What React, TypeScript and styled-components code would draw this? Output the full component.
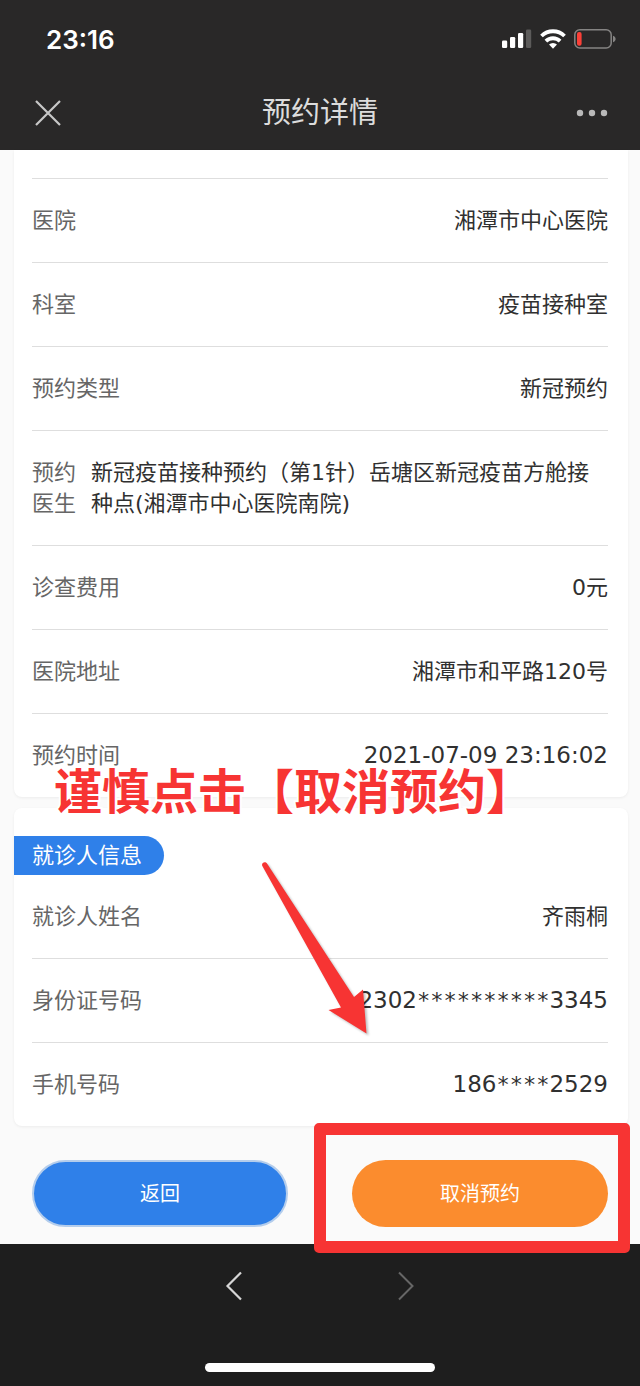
import React from "react";
import styled, { createGlobalStyle } from "styled-components";

const GlobalStyle = createGlobalStyle`
  * { box-sizing: border-box; }
  body {
    margin: 0;
    background: #1e1e1e;
    font-family: "DejaVu Sans", "Noto Sans CJK SC", sans-serif;
    font-size: 22px;
    line-height: 31px;
    color: #303030;
  }
  button {
    margin: 0;
    padding: 0;
    border: 0;
    background: none;
    font-family: inherit;
    cursor: pointer;
  }
`;

const Screen = styled.div`
  min-height: 100vh;
  display: flex;
  flex-direction: column;
  overflow: hidden;
`;

const Header = styled.header`
  background: #292828;
`;

const StatusBar = styled.div`
  height: 76px;
  padding: 2px 24px 0 46px;
  display: flex;
  align-items: center;
  justify-content: space-between;
`;

const Clock = styled.time`
  font-family: Inter, sans-serif;
  font-size: 26px;
  font-weight: 600;
  color: #fff;
`;

const StatusIcons = styled.div`
  display: flex;
  align-items: center;
  gap: 8px;
`;

const NavBar = styled.div`
  height: 74px;
  padding: 0 32px;
  display: grid;
  grid-template-columns: 32px 1fr 32px;
  align-items: center;
`;

const Title = styled.h1`
  margin: 0;
  text-align: center;
  font-size: 29px;
  line-height: 40px;
  font-weight: 400;
  color: #dcdcdc;
`;

const IconButton = styled.button`
  height: 32px;
  display: flex;
  align-items: center;
  justify-content: center;
  color: ${(p: { $color: string }) => p.$color};
`;

const Content = styled.main`
  background: #fafafa;
`;

const Card = styled.section<{ $first?: boolean }>`
  position: relative;
  margin: 0 12px 0 14px;
  padding: 28px 20px 0 18px;
  background: #fff;
  border-radius: ${(p) => (p.$first ? "0 0 8px 8px" : "8px")};
  box-shadow: 0 1px 3px rgba(0, 0, 0, 0.06);
  & + & { margin-top: 11px; }
`;

const Fields = styled.dl<{ $topLine?: boolean }>`
  margin: 0;
  border-top: ${(p) => (p.$topLine ? "1px solid #dedede" : "0")};
`;

const Field = styled.div`
  display: flex;
  justify-content: space-between;
  gap: 15px;
  padding: 26px 0;
  border-bottom: 1px solid #dedede;
  &:last-child { border-bottom: 0; }
`;

const Label = styled.dt<{ $narrow?: boolean }>`
  flex: none;
  width: ${(p) => (p.$narrow ? "44px" : "auto")};
  color: #666;
`;

const Value = styled.dd<{ $numeric?: boolean }>`
  margin: 0;
  font-size: ${(p) => (p.$numeric ? "23px" : "22px")};
`;

const Mask = styled.span`
  font-family: "DejaVu Sans Mono", monospace;
  font-size: 22px;
`;

const Badge = styled.h2`
  width: fit-content;
  margin: 0 0 0 -18px;
  padding: 4px 22px 4px 18px;
  border-radius: 0 20px 20px 0;
  background: #2f80e9;
  color: #fff;
  font-size: 22px;
  line-height: 31px;
  font-weight: 400;
`;

const Warning = styled.p`
  position: absolute;
  top: -48px;
  left: 40px;
  margin: 0;
  white-space: nowrap;
  font-size: 48px;
  line-height: 64px;
  font-weight: 700;
  color: #f73433;
  -webkit-text-stroke: 4px #fff;
  paint-order: stroke fill;
  z-index: 1;
`;

const Arrow = styled.svg`
  position: absolute;
  top: 48px;
  left: 242px;
  z-index: 1;
  filter: drop-shadow(2px 2px 1px rgba(0, 0, 0, 0.25));
`;

const Actions = styled.div`
  display: grid;
  grid-template-columns: 1fr 1fr;
  gap: 64px;
  padding: 34px 32px 17px;
`;

const ActionSlot = styled.div`
  position: relative;
  display: grid;
`;

const ActionButton = styled.button<{ $tone: "blue" | "orange" }>`
  height: 67px;
  border-radius: 34px;
  border: ${(p) => (p.$tone === "blue" ? "2px solid #b4cdec" : "0")};
  background: ${(p) => (p.$tone === "blue" ? "#2f80e9" : "#fb8c2e")};
  color: #fff;
  font-size: 20px;
  line-height: 28px;
`;

const Highlight = styled.div`
  position: absolute;
  inset: -37px -22px -26px -38px;
  border: 12px solid #f73433;
  border-radius: 5px;
  pointer-events: none;
  z-index: 1;
`;

const Footer = styled.footer`
  flex: 1;
  min-height: 142px;
  padding: 26px 0 14px;
  display: flex;
  flex-direction: column;
  align-items: center;
  justify-content: space-between;
  background: #1e1e1e;
`;

const HistoryNav = styled.nav`
  display: flex;
  gap: 140px;
`;

const HomeIndicator = styled.div`
  width: 36%;
  height: 9px;
  border-radius: 5px;
  background: #fff;
`;

const SignalIcon = () => (
  <svg width="30" height="20" viewBox="0 0 30 20" fill="#fff" aria-hidden="true">
    <rect x="0" y="11.5" width="5.2" height="7.5" rx="1.3" />
    <rect x="8" y="8" width="5.2" height="11" rx="1.3" />
    <rect x="16" y="4" width="5.2" height="15" rx="1.3" />
    <rect x="24" y="0.5" width="5.2" height="18.5" rx="1.3" fill="#5c5b5a" />
  </svg>
);

const WifiIcon = () => (
  <svg width="26" height="20" viewBox="0 0 26 20" fill="none" stroke="#fff" strokeWidth="3.8" aria-hidden="true">
    <path d="M1.500 7a16.300 16.300 0 0 1 23 0" />
    <path d="M5.900 12.200a10 10 0 0 1 14.200 0" />
    <path d="M13 19.800l-4-4.200a5.700 5.700 0 0 1 8 0z" fill="#fff" stroke="none" />
  </svg>
);

const BatteryIcon = () => (
  <svg width="42" height="20" viewBox="0 0 42 20" aria-hidden="true">
    <rect x="0.8" y="0.8" width="36.4" height="18.2" rx="5" fill="none" stroke="#858483" strokeWidth="1.5" />
    <rect x="3" y="3" width="4.6" height="13.8" rx="2" fill="#fb4038" />
    <path d="M39 6.800c1.600.6 2.600 1.700 2.600 3.200s-1 2.600-2.600 3.200z" fill="#858483" />
  </svg>
);

const App = () => (
  <Screen>
    <GlobalStyle />
    <Header>
      <StatusBar>
        <Clock>23:16</Clock>
        <StatusIcons>
          <SignalIcon />
          <WifiIcon />
          <BatteryIcon />
        </StatusIcons>
      </StatusBar>
      <NavBar>
        <IconButton $color="#c8c8c8" aria-label="关闭">
          <svg width="26" height="26" viewBox="0 0 26 26" fill="none" stroke="currentColor" strokeWidth="2.2">
            <path d="M1 1L25 25M25 1L1 25" />
          </svg>
        </IconButton>
        <Title>预约详情</Title>
        <IconButton $color="#b9b9b9" aria-label="更多">
          <svg width="32" height="8" viewBox="0 0 32 8" fill="currentColor">
            <circle cx="4" cy="4" r="3.2" />
            <circle cx="16" cy="4" r="3.2" />
            <circle cx="28" cy="4" r="3.2" />
          </svg>
        </IconButton>
      </NavBar>
    </Header>

    <Content>
      <Card $first>
        <Fields $topLine>
          <Field><Label>医院</Label><Value>湘潭市中心医院</Value></Field>
          <Field><Label>科室</Label><Value>疫苗接种室</Value></Field>
          <Field><Label>预约类型</Label><Value>新冠预约</Value></Field>
          <Field>
            <Label $narrow>预约医生</Label>
            <Value>新冠疫苗接种预约（第1针）岳塘区新冠疫苗方舱接种点(湘潭市中心医院南院)</Value>
          </Field>
          <Field><Label>诊查费用</Label><Value>0元</Value></Field>
          <Field><Label>医院地址</Label><Value>湘潭市和平路120号</Value></Field>
          <Field><Label>预约时间</Label><Value $numeric>2021-07-09 23:16:02</Value></Field>
        </Fields>
      </Card>

      <Card>
        <Warning>谨慎点击【取消预约】</Warning>
        <Arrow width="120" height="184" viewBox="0 0 120 184" fill="#f73433" aria-hidden="true">
          <path d="M6.200 9.800C5.200 6.800 9.200 4.800 11.200 7.800L98 141L107 133.500L110.500 177.500L72.500 154L85 151.500Z" />
        </Arrow>
        <Badge>就诊人信息</Badge>
        <Fields>
          <Field><Label>就诊人姓名</Label><Value>齐雨桐</Value></Field>
          <Field>
            <Label>身份证号码</Label>
            <Value $numeric>2302<Mask>**********</Mask>3345</Value>
          </Field>
          <Field>
            <Label>手机号码</Label>
            <Value $numeric>186<Mask>****</Mask>2529</Value>
          </Field>
        </Fields>
      </Card>

      <Actions>
        <ActionSlot>
          <ActionButton $tone="blue">返回</ActionButton>
        </ActionSlot>
        <ActionSlot>
          <ActionButton $tone="orange">取消预约</ActionButton>
          <Highlight />
        </ActionSlot>
      </Actions>
    </Content>

    <Footer>
      <HistoryNav>
        <IconButton $color="#d6d6d6" aria-label="后退">
          <svg width="32" height="32" viewBox="0 0 32 32" fill="none" stroke="currentColor" strokeWidth="2.2">
            <path d="M23 2.500L9.500 16L23 29.500" />
          </svg>
        </IconButton>
        <IconButton $color="#666" aria-label="前进" disabled>
          <svg width="32" height="32" viewBox="0 0 32 32" fill="none" stroke="currentColor" strokeWidth="2">
            <path d="M9 2.500L22.500 16L9 29.500" />
          </svg>
        </IconButton>
      </HistoryNav>
      <HomeIndicator />
    </Footer>
  </Screen>
);

export default App;
